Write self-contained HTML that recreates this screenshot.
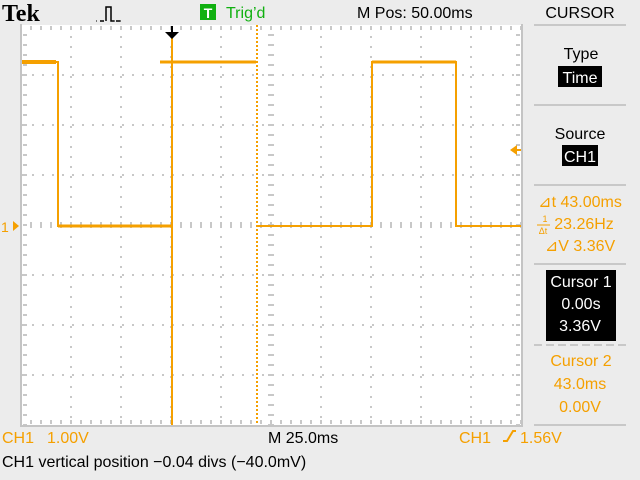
<!DOCTYPE html>
<html><head><meta charset="utf-8"><style>
html,body{margin:0;padding:0;background:#ececec;}
svg{display:block;font-family:"Liberation Sans",sans-serif;}
</style></head><body>
<svg width="640" height="480" viewBox="0 0 640 480" xmlns="http://www.w3.org/2000/svg">
<rect width="640" height="480" fill="#ececec"/>
<rect x="22" y="25" width="499" height="400" fill="#ffffff"/>
<path d="M21 24V426H522V24" fill="none" stroke="#c4c4c4" stroke-width="2"/>
<!-- major grid dotted -->
<g stroke="#c8c8c8" stroke-width="2" stroke-dasharray="2 8">
<line x1="71" y1="26" x2="71" y2="425"/><line x1="121" y1="26" x2="121" y2="425"/>
<line x1="171" y1="26" x2="171" y2="425"/><line x1="221" y1="26" x2="221" y2="425"/>
<line x1="321" y1="26" x2="321" y2="425"/>
<line x1="371" y1="26" x2="371" y2="425"/><line x1="421" y1="26" x2="421" y2="425"/>
<line x1="471" y1="26" x2="471" y2="425"/>
<line x1="22" y1="75" x2="521" y2="75"/><line x1="22" y1="125" x2="521" y2="125"/>
<line x1="22" y1="175" x2="521" y2="175"/><line x1="22" y1="275" x2="521" y2="275"/>
<line x1="22" y1="325" x2="521" y2="325"/><line x1="22" y1="375" x2="521" y2="375"/>
</g>
<!-- ticks -->
<g stroke="#c8c8c8" stroke-width="4" stroke-dasharray="2 8">
<line x1="25" y1="34" x2="25" y2="425"/>
<line x1="518" y1="34" x2="518" y2="425"/>
<line x1="30" y1="28" x2="521" y2="28"/>
<line x1="30" y1="422" x2="521" y2="422"/>
</g>
<g stroke="#c8c8c8" stroke-width="6" stroke-dasharray="2 8">
<line x1="271" y1="34" x2="271" y2="425"/>
<line x1="30" y1="225" x2="521" y2="225"/>
</g>
<!-- waveform -->
<g stroke="#f5a000" fill="none" stroke-width="2">
<path d="M22 62H58V226H172"/>
<path d="M160 62H256" stroke-width="3"/>
<path d="M22 62H56" stroke-width="4"/>
<path d="M258 226H372V62H456V226H521"/>
<path d="M372 62H456" stroke-width="3"/>
<path d="M58 226H172" stroke-width="3"/>
<line x1="172" y1="36" x2="172" y2="425"/>
<line x1="257" y1="25" x2="257" y2="425" stroke-dasharray="2 2"/>
</g>
<path d="M165 32H179L172 39Z" fill="#000"/><line x1="172" y1="26" x2="172" y2="36" stroke="#000" stroke-width="2"/>
<path d="M510 150L517 145V155Z" fill="#f5a000"/><line x1="514" y1="150" x2="521" y2="150" stroke="#f5a000" stroke-width="2"/>
<text x="1" y="232" font-size="14" fill="#f5a000">1</text><path d="M13 221L19 226L13 231Z" fill="#f5a000"/>
<!-- top bar -->
<text x="2" y="21" font-family="Liberation Serif,serif" font-weight="bold" font-size="24" fill="#000">Tek</text>
<path d="M100 21H104M106 21V7H111V21H114M116 21H120" fill="none" stroke="#000" stroke-width="1.5"/>
<path d="M96 21h2M114 21h8" stroke="#000" stroke-dasharray="1 2"/>
<rect x="200" y="4" width="16" height="16" fill="#10b010"/>
<text x="208" y="18" font-size="14" fill="#fff" text-anchor="middle" font-weight="bold">T</text>
<text x="226" y="18" font-size="16" fill="#10b010">Trig’d</text>
<text x="357" y="18" font-size="16" fill="#000">M Pos: 50.00ms</text>
<text x="580" y="18" font-size="16" fill="#000" text-anchor="middle">CURSOR</text>
<!-- right panel -->
<g stroke="#c8c8c8" stroke-width="2">
<line x1="534" y1="25" x2="626" y2="25"/><line x1="534" y1="105" x2="626" y2="105"/>
<line x1="534" y1="185" x2="626" y2="185"/><line x1="534" y1="264" x2="626" y2="264"/>
<line x1="534" y1="345" x2="626" y2="345" stroke-dasharray="8 4"/><line x1="534" y1="425" x2="626" y2="425"/>
</g>
<g font-size="16" text-anchor="middle">
<text x="581" y="59" fill="#000">Type</text>
<rect x="558" y="66" width="44" height="21" fill="#000"/>
<text x="580" y="83" fill="#fff">Time</text>
<text x="580" y="139" fill="#000">Source</text>
<rect x="562" y="145" width="36" height="21" fill="#000"/>
<text x="580" y="162" fill="#fff">CH1</text>
<text x="580" y="207" fill="#f5a000">⊿t 43.00ms</text>
<text x="584" y="229" fill="#f5a000">23.26Hz</text>
<text x="545" y="222" font-size="9" fill="#f5a000">1</text><line x1="537" y1="225" x2="550" y2="225" stroke="#f5a000"/><text x="543" y="234" font-size="9" fill="#f5a000">Δt</text>
<text x="580" y="251" fill="#f5a000">⊿V 3.36V</text>
<rect x="546" y="270" width="70" height="71" fill="#000"/>
<text x="581" y="287" fill="#fff">Cursor 1</text>
<text x="581" y="309" fill="#fff">0.00s</text>
<text x="580" y="331" fill="#fff">3.36V</text>
<text x="581" y="366" fill="#f5a000">Cursor 2</text>
<text x="580" y="389" fill="#f5a000">43.0ms</text>
<text x="580" y="412" fill="#f5a000">0.00V</text>
</g>
<!-- bottom -->
<text x="2" y="443" font-size="16" fill="#f5a000">CH1</text>
<text x="47" y="443" font-size="16" fill="#f5a000">1.00V</text>
<text x="268" y="443" font-size="16" fill="#000">M 25.0ms</text>
<text x="459" y="443" font-size="16" fill="#f5a000">CH1</text>
<path d="M503 441H507L513 431H516" fill="none" stroke="#f5a000" stroke-width="2"/>
<text x="520" y="443" font-size="16" fill="#f5a000">1.56V</text>
<text x="2" y="467" font-size="16" fill="#000">CH1 vertical position −0.04 divs (−40.0mV)</text>
</svg>
</body></html>
